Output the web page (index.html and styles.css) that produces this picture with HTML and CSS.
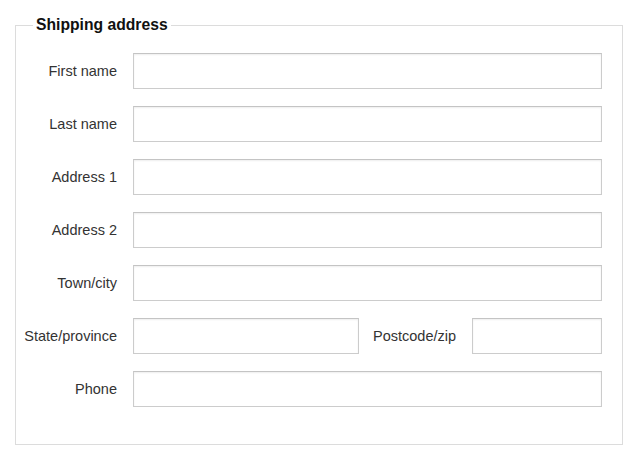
FILE: index.html
```html
<!DOCTYPE html>
<html lang="en">
<head>
    <meta charset="UTF-8">
    <meta name="viewport" content="width=device-width, initial-scale=1.0">
    <title>Shipping address</title>
    <link rel="stylesheet" href="styles.css">
</head>
<body>
    <form class="address-form">
        <fieldset class="address">
            <legend>Shipping address</legend>
            <div class="rows">
                <div class="row">
                    <label for="first">First name</label>
                    <input type="text" id="first">
                </div>
                <div class="row">
                    <label for="last">Last name</label>
                    <input type="text" id="last">
                </div>
                <div class="row">
                    <label for="addr1">Address 1</label>
                    <input type="text" id="addr1">
                </div>
                <div class="row">
                    <label for="addr2">Address 2</label>
                    <input type="text" id="addr2">
                </div>
                <div class="row">
                    <label for="town">Town/city</label>
                    <input type="text" id="town">
                </div>
                <div class="row">
                    <label for="state">State/province</label>
                    <input type="text" id="state" class="state">
                    <label for="zip" class="inline-label">Postcode/zip</label>
                    <input type="text" id="zip" class="zip">
                </div>
                <div class="row">
                    <label for="phone">Phone</label>
                    <input type="text" id="phone">
                </div>
            </div>
        </fieldset>
    </form>
</body>
</html>
```

FILE: styles.css
```css
body {
    margin: 0;
    padding: 16px 16px 0 15px;
    background: #fff;
    font-family: "Liberation Sans", Arial, Helvetica, sans-serif;
    color: #333;
}
.address {
    margin: 0;
    padding: 19px 20px 37px 0;
    border: 1px solid #dcdcdc;
}
.address legend {
    margin-left: 17px;
    padding: 0 3px;
    font-size: 15.7px;
    line-height: 18px;
    font-weight: bold;
    color: #111;
}
.rows {
    display: flex;
    flex-direction: column;
    gap: 17px;
}
.row {
    display: flex;
    align-items: center;
}
.row label {
    width: 101px;
    flex: none;
    margin-right: 16px;
    text-align: right;
    font-size: 14.5px;
    color: #333;
    white-space: nowrap;
}
.row input {
    flex: 1;
    min-width: 0;
    height: 36px;
    margin: 0;
    padding: 4px 8px;
    box-sizing: border-box;
    border: 1px solid #ccc;
    border-top-color: #c4c4c4;
    border-radius: 0;
    box-shadow: inset 0 1px 2px rgba(0, 0, 0, 0.07);
    font-family: inherit;
    font-size: 14px;
}
.row input.state {
    flex: none;
    width: 226px;
}
.row .inline-label {
    flex: 1;
    width: auto;
    margin: 0;
    padding-left: 14px;
    text-align: left;
}
.row input.zip {
    flex: none;
    width: 130px;
}
```
